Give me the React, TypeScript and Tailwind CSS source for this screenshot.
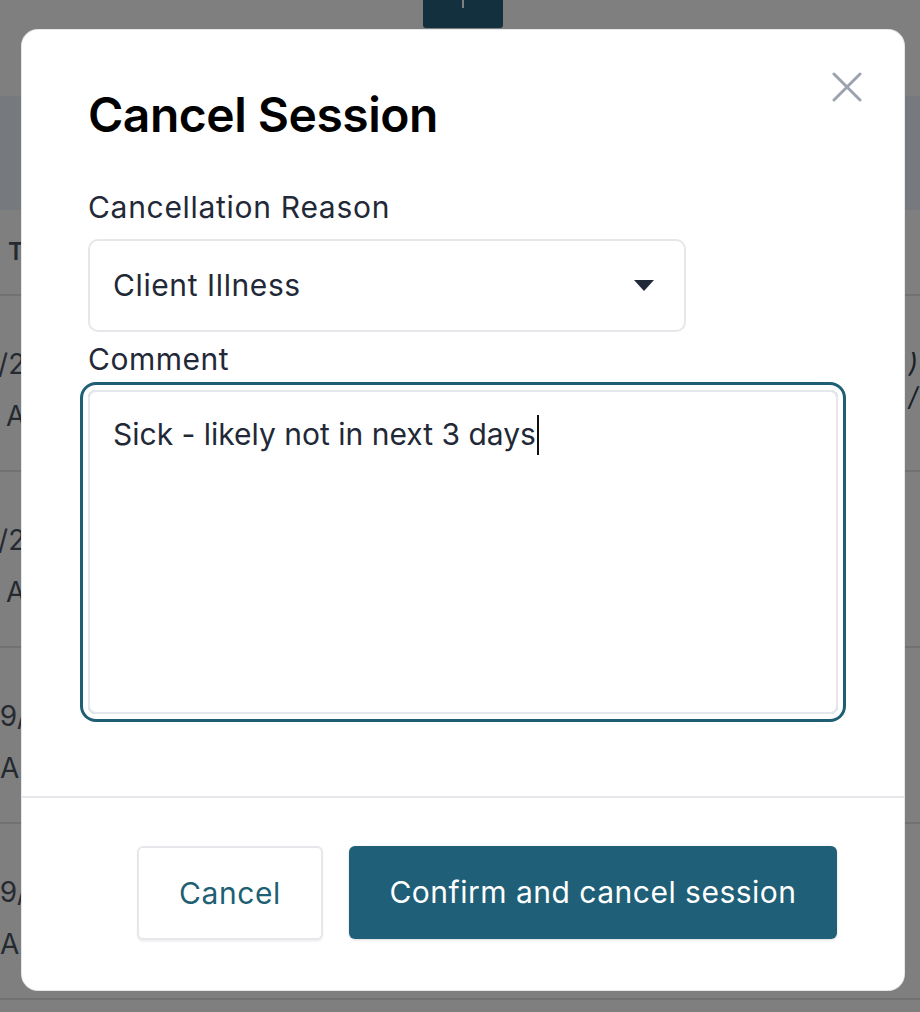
import { useState } from 'react'

const rows = [
  { date: '10/21/2024', dateMl: '-ml-[31px]', time: 'AM 10:00', timeMl: 'ml-[6px]', extra: true },
  { date: '10/24/2024', dateMl: '-ml-[31px]', time: 'AM 10:00', timeMl: 'ml-[6px]', extra: false },
  { date: '09/30/2024', dateMl: '-ml-[18px]', time: 'AM 10:00', timeMl: 'ml-[0px]', extra: false },
  { date: '09/26/2024', dateMl: '-ml-[18px]', time: 'AM 10:00', timeMl: 'ml-[0px]', extra: false },
]

export default function App() {
  const [comment, setComment] = useState('Sick - likely not in next 3 days')

  return (
    <div className="relative w-[920px] h-[1012px] overflow-hidden bg-white font-['Inter',sans-serif]">
      {/* page behind the dialog */}
      <div className="flex flex-col">
        <div className="h-[96px] bg-white">
          <div className="ml-[423px] w-[80px] h-[28px] rounded-b-[3px] bg-[#24607a] flex justify-center">
            <div className="w-[2px] h-[8px] bg-white" />
          </div>
        </div>
        <div className="h-[114px] bg-[#ecf4ff]" />
        <div className="h-[86px] border-b-2 border-[#e2e2e2] flex items-center pl-[8px]">
          <span className="text-[24px] font-semibold text-[#4b5563]">T</span>
        </div>
        {rows.map((r, i) => (
          <div key={i} className="h-[176px] border-b-2 border-[#e2e2e2] flex justify-between">
            <div className="flex flex-col items-start gap-[24px] pt-[54px] text-[28px] text-[#4b5563] leading-none whitespace-nowrap">
              <span className={r.dateMl}>{r.date}</span>
              <span className={r.timeMl}>{r.time}</span>
            </div>
            {r.extra && (
              <div className="flex flex-col gap-[8px] pt-[54px] pr-[2px] text-[26px] italic text-[#374151] leading-none">
                <span>)</span>
                <span>/</span>
              </div>
            )}
          </div>
        ))}
      </div>

      {/* overlay + dialog */}
      <div className="absolute inset-0 bg-black/50">
        <div className="relative ml-[22px] mt-[30px] w-[882px] h-[960px] bg-white rounded-[16px] shadow-[0_0_0_1px_#e5e7eb] flex flex-col">
          <button className="absolute right-[42px] top-[42px] w-[30px] h-[30px] flex items-center justify-center text-[#9ca3af]">
            <svg width="30" height="30" viewBox="0 0 30 30" fill="none" stroke="currentColor" strokeWidth="3" strokeLinecap="round">
              <path d="M2 2L28 28M28 2L2 28" />
            </svg>
          </button>

          <div className="px-[66px] pt-[56px] flex-1">
            <h2 className="text-[48px] leading-[58px] font-semibold text-black tracking-[-0.5px]">Cancel Session</h2>

            <label className="block mt-[45px] text-[30px] leading-[36px] tracking-[0.7px] text-[#1f2937]">Cancellation Reason</label>
            <div className="mt-[14px] w-[598px] h-[93px] border-2 border-[#e5e7eb] rounded-[10px] flex items-center justify-between pl-[23px] pr-[30px]">
              <span className="text-[30px] tracking-[0.6px] text-[#1f2937]">Client Illness</span>
              <svg width="20" height="11" viewBox="0 0 20 11" className="text-[#1f2937]">
                <path d="M0 0H20L10 11Z" fill="currentColor" />
              </svg>
            </div>

            <label className="block mt-[9px] text-[30px] leading-[36px] tracking-[0.5px] text-[#1f2937]">Comment</label>
            <div className="relative mt-[13px] w-[750px] h-[324px] rounded-[8px] border-2 border-[#e5e7eb] ring-[3px] ring-[#1e5f74] ring-offset-[5px] ring-offset-white">
              <textarea
                autoFocus
                value={comment}
                onChange={e => setComment(e.target.value)}
                onFocus={e => {
                  const len = e.target.value.length
                  e.target.setSelectionRange(len, len)
                }}
                className="w-full h-full resize-none outline-none bg-transparent px-[23px] pt-[20px] text-[30px] leading-[44px] text-[#1f2937] caret-transparent"
              />
              {/* text caret */}
              <span className="pointer-events-none absolute left-[447px] top-[23px] w-[2px] h-[40px] bg-[#111]" />
            </div>
          </div>

          <div className="h-[2px] bg-[#e5e7eb] mb-[48px]" />

          <div className="flex justify-end gap-[26px] pr-[67px] pb-[50px]">
            <button className="w-[186px] h-[94px] rounded-[6px] border-2 border-[#e5e7eb] bg-white shadow-[0_2px_2px_rgba(0,0,0,0.06)] text-[30px] tracking-[0.6px] text-[#1e5f74]">
              Cancel
            </button>
            <button className="w-[488px] h-[93px] rounded-[6px] bg-[#1f5f77] shadow-[0_1px_3px_rgba(0,0,0,0.15)] text-[30px] tracking-[0.5px] text-white">
              Confirm and cancel session
            </button>
          </div>
        </div>
      </div>
    </div>
  )
}
